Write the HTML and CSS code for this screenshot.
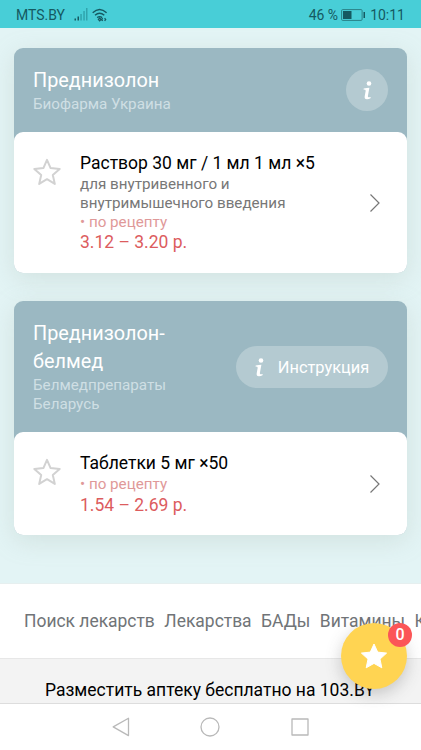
FILE: index.html
```html
<!DOCTYPE html>
<html lang="ru">
<head>
<meta charset="utf-8">
<title>103.BY</title>
<link rel="stylesheet" href="styles.css">
</head>
<body>
<header class="status">
  <span class="carrier">MTS.BY</span>
  <svg class="signal" width="14" height="14" viewBox="0 0 14 14"><path d="M.5 11.5h1.5v2H.5zM3.5 9.5H5v4H3.5z" fill="#155961"/><path d="M6.3 7h1.5v6.5H6.3zM9.3 4h1.5v9.5H9.3zM12 1h1.5v12.5H12z" fill="#30a4ad"/></svg>
  <svg class="wifi" width="16" height="14" viewBox="0 0 16 14" fill="none" stroke="#155961" stroke-width="1.4"><path d="M.7 4.8Q7.5-2 14.6 4.8M3 7.3q4.6-4.2 9.3 0M5.2 9.6q2.5-2 4.9 0"/><path d="M6.4 11.4 7.7 10l1.3 1.4-1.3 1.4zM10.7 10.2 9.6 11.5l1.1 1.3M12.6 10.2l1.1 1.3-1.1 1.3" stroke-width="1.2"/></svg>
  <span class="percent">46 %</span>
  <svg class="battery" width="25" height="12" viewBox="0 0 25 12"><rect x=".6" y=".6" width="20.5" height="10.8" rx="1" fill="none" stroke="#2a8087"/><path d="M2 2h8.5v8H2zM22.5 3H24v6h-1.5z" fill="#155961"/></svg>
  <span class="clock">10:11</span>
</header>
<main class="page">
  <section class="results">
    <article class="card">
      <div class="head head-short">
        <div><h2>Преднизолон</h2><p class="maker">Биофарма Украина</p></div>
        <button class="info round"><svg width="9" height="19" viewBox="0 0 9 19"><circle cx="6" cy="2.5" r="2.3" fill="#fff"/><path d="M.7 7.4Q4 7.2 6.4 6.8L4.9 14.8q-.3 1.8 1.2 1.5l1.6-.3-.2 1.2q-1.8 1.1-3.7 1-2.6-.2-2.1-3l1-5.4q.2-1.3-2.2-1.3z" fill="#fff"/></svg></button>
      </div>
      <div class="item">
        <svg class="star" width="30" height="30" viewBox="0 0 30 30"><path d="M15 2.8l3.6 8.3 9.1.9-6.9 6 2 8.9-7.8-4.7-7.8 4.7 2-8.9-6.9-6 9.1-.9z"/></svg>
        <div class="desc"><h3>Раствор 30 мг / 1 мл 1 мл ×5</h3><p class="note">для внутривенного и<br>внутримышечного введения</p><p class="rx">• по рецепту</p><p class="price">3.12 – 3.20 р.</p></div>
        <svg class="chevron" width="12" height="20" viewBox="0 0 12 20"><path d="M1.5 1.5 10 10l-8.5 8.5"/></svg>
      </div>
    </article>
    <article class="card">
      <div class="head head-tall">
        <div><h2>Преднизолон-<br>белмед</h2><p class="maker">Белмедпрепараты<br>Беларусь</p></div>
        <button class="info wide"><svg width="9" height="19" viewBox="0 0 9 19"><circle cx="6" cy="2.5" r="2.3" fill="#fff"/><path d="M.7 7.4Q4 7.2 6.4 6.8L4.9 14.8q-.3 1.8 1.2 1.5l1.6-.3-.2 1.2q-1.8 1.1-3.7 1-2.6-.2-2.1-3l1-5.4q.2-1.3-2.2-1.3z" fill="#fff"/></svg><span>Инструкция</span></button>
      </div>
      <div class="item item-low">
        <svg class="star" width="30" height="30" viewBox="0 0 30 30"><path d="M15 2.8l3.6 8.3 9.1.9-6.9 6 2 8.9-7.8-4.7-7.8 4.7 2-8.9-6.9-6 9.1-.9z"/></svg>
        <div class="desc"><h3>Таблетки 5 мг ×50</h3><p class="rx">• по рецепту</p><p class="price">1.54 – 2.69 р.</p></div>
        <svg class="chevron" width="12" height="20" viewBox="0 0 12 20"><path d="M1.5 1.5 10 10l-8.5 8.5"/></svg>
      </div>
    </article>
  </section>
  <nav class="tabs"><span>Поиск лекарств</span><span>Лекарства</span><span>БАДы</span><span>Витамины</span><span>Косметика</span></nav>
  <footer class="promo">Разместить аптеку бесплатно на 103.BY</footer>
</main>
<div class="fab"><svg width="28" height="28" viewBox="0 0 28 28"><path d="M14 2l3.7 8.1 8.9 1-6.6 6 1.8 8.7-7.8-4.4-7.8 4.4L8 17.1l-6.6-6 8.9-1z" fill="#fff" stroke="#fff" stroke-linejoin="round"/></svg><span class="badge">0</span></div>
<div class="softkeys">
  <svg width="20" height="22" viewBox="0 0 20 22"><path d="M17.5 2.2v17.4L2.2 10.9z"/></svg>
  <svg width="20" height="22" viewBox="0 0 20 22"><circle cx="10" cy="11" r="9"/></svg>
  <svg width="20" height="22" viewBox="0 0 20 22"><path d="M2 3h16v16H2z"/></svg>
</div>
</body>
</html>
```
FILE: styles.css
```css
* { box-sizing: border-box; }
body { margin: 0; width: 421px; height: 750px; overflow: hidden; position: relative; display: flex; flex-direction: column; font-family: Roboto, "Liberation Sans", sans-serif; background: #fff; }
h2, h3, p { margin: 0; font-weight: 400; white-space: nowrap; }
.status { height: 28px; flex: none; display: flex; align-items: center; padding: 1px 16px 0; background: #48ced7; color: #155961; font-size: 14px; }
.signal { margin-left: 9px; margin-top: -1px; }
.wifi { margin-left: 4px; }
.percent { margin-left: auto; }
.battery { margin: 0 4px 0 3px; }
.page { height: 675px; overflow: hidden; flex: none; }
.results { height: 556px; padding: 20px 14px 0; background: #e3f4f5; border-bottom: 1px solid #e6efef; }
.card { border-radius: 9px; background: #9bb8c2; box-shadow: 0 6px 24px rgba(160, 175, 165, .25); margin-bottom: 28px; }
.head { display: flex; justify-content: space-between; padding: 19px 19px 0; color: #fff; }
.head-short { height: 84px; }
.head-tall { height: 131px; }
h2 { font-size: 19.85px; line-height: 28px; }
.maker { font-size: 15.2px; line-height: 19px; color: #cfdfe4; }
.info { border: 0; padding: 0; background: #b4cad1; border-radius: 21px; height: 42px; color: #fff; font: inherit; font-size: 16.4px; display: flex; align-items: center; justify-content: center; }
.round { width: 42px; margin-top: 2px; }
.wide { width: 152px; margin-top: 26px; gap: 14px; }
.item { height: 141px; background: #fff; border-radius: 9px; display: flex; align-items: flex-start; padding: 19px 26px 0 18px; }
.item-low { height: 103px; }
.star { flex: none; margin-top: 6px; fill: none; stroke: #d2d2d2; stroke-width: 2; stroke-linejoin: round; }
.desc { margin-left: 18px; }
h3 { font-size: 17.5px; line-height: 24px; color: #000; }
.note, .rx { font-size: 15.2px; line-height: 19px; color: #777; }
.rx { color: #df9999; }
.price { font-size: 17.5px; line-height: 22px; color: #dc5c5e; }
.note ~ .price { margin-top: -1px; }
.chevron { flex: none; margin-left: auto; align-self: center; margin-top: -19px; fill: none; stroke: #777; stroke-width: 1.2; }
.tabs { height: 75px; padding-left: 24px; display: flex; gap: 9.5px; align-items: center; white-space: nowrap; font-size: 17.45px; color: #707477; border-bottom: 1px solid #e7e7e7; }
.promo { height: 44px; background: #f3f3f3; padding: 19px 0 0 45px; line-height: 24px; white-space: nowrap; font-size: 17.5px; color: #000; }
.fab { position: absolute; left: 341px; top: 623px; width: 66px; height: 66px; border-radius: 50%; background: #ffd452; box-shadow: 0 5px 16px rgba(80, 80, 80, .28); display: flex; align-items: center; justify-content: center; }
.badge { position: absolute; right: -5px; top: 0; width: 24px; height: 24px; border-radius: 50%; background: #fb5557; color: #fff; text-align: center; font-size: 16px; line-height: 24px; font-weight: 500; }
.softkeys { flex: 1; background: #fff; border-top: 1px solid #ddd; display: flex; justify-content: center; gap: 69.5px; padding: 12px 1px 0 0; }
.softkeys svg { fill: none; stroke: #b9b9b9; stroke-width: 1.3; stroke-linejoin: round; }
```
